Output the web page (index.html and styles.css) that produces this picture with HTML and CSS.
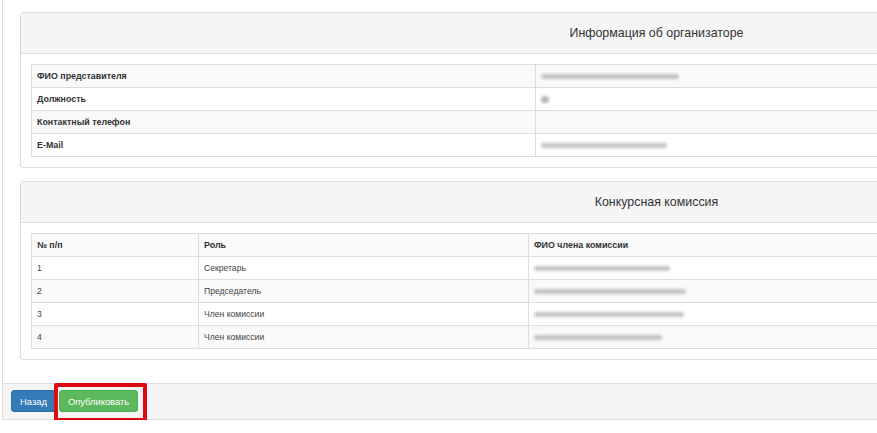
FILE: index.html
```html
<!DOCTYPE html>
<html lang="ru">
<head>
    <meta charset="UTF-8">
    <meta name="viewport" content="width=device-width, initial-scale=1.0">
    <title>Публикация конкурса</title>
    <link rel="stylesheet" href="styles.css">
</head>
<body>
    <div class="page">
        <div class="outer-panel">
            <div class="outer-body">

                <div class="panel">
                    <div class="panel-heading">Информация об организаторе</div>
                    <div class="panel-body">
                        <table class="table table-info">
                            <tbody>
                                <tr>
                                    <th class="col-label">ФИО представителя</th>
                                    <td><span class="blur" style="width: 138px"></span></td>
                                </tr>
                                <tr>
                                    <th>Должность</th>
                                    <td><span class="blur blur-dot" style="width: 8px"></span></td>
                                </tr>
                                <tr>
                                    <th>Контактный телефон</th>
                                    <td></td>
                                </tr>
                                <tr>
                                    <th>E-Mail</th>
                                    <td><span class="blur" style="width: 126px"></span></td>
                                </tr>
                            </tbody>
                        </table>
                    </div>
                </div>

                <div class="panel">
                    <div class="panel-heading">Конкурсная комиссия</div>
                    <div class="panel-body">
                        <table class="table table-commission">
                            <tbody>
                                <tr>
                                    <th class="col-num">№ п/п</th>
                                    <th class="col-role">Роль</th>
                                    <th>ФИО члена комиссии</th>
                                </tr>
                                <tr>
                                    <td>1</td>
                                    <td>Секретарь</td>
                                    <td><span class="blur" style="width: 136px"></span></td>
                                </tr>
                                <tr>
                                    <td>2</td>
                                    <td>Председатель</td>
                                    <td><span class="blur" style="width: 152px"></span></td>
                                </tr>
                                <tr>
                                    <td>3</td>
                                    <td>Член комиссии</td>
                                    <td><span class="blur" style="width: 150px"></span></td>
                                </tr>
                                <tr>
                                    <td>4</td>
                                    <td>Член комиссии</td>
                                    <td><span class="blur" style="width: 128px"></span></td>
                                </tr>
                            </tbody>
                        </table>
                    </div>
                </div>

            </div>
            <div class="outer-footer">
                <button class="btn btn-primary">Назад</button>
                <span class="highlight">
                    <button class="btn btn-success">Опубликовать</button>
                </span>
            </div>
        </div>
    </div>
</body>
</html>
```

FILE: styles.css
```css
html, body {
    overflow: hidden;
}
body {
    margin: 0;
    font-family: "Liberation Sans", Arial, Helvetica, sans-serif;
    font-size: 8.6px;
    color: #333;
    background-color: #fff;
}
.page {
    width: 1311px;
}
.outer-panel {
    margin-left: 2px;
    border: 1px solid #ddd;
    border-top: none;
    background-color: #fff;
}
.outer-body {
    padding: 12px 17px 23px 17px;
}
.panel {
    border: 1px solid #ddd;
    border-radius: 3px;
    margin-bottom: 13px;
    background-color: #fff;
}
.panel:last-child {
    margin-bottom: 0;
}
.panel-heading {
    height: 40px;
    line-height: 40px;
    background-color: #f5f5f5;
    border-bottom: 1px solid #ddd;
    text-align: center;
    font-size: 12.4px;
    color: #333;
}
.panel-body {
    padding: 10px;
}
.table {
    width: 100%;
    border-collapse: collapse;
}
.table th,
.table td {
    border: 1px solid #ddd;
    height: 22px;
    padding: 0 5px;
    text-align: left;
    vertical-align: middle;
    line-height: 12px;
}
.table th {
    font-size: 8.9px;
    font-weight: bold;
    color: #333;
}
.table td {
    color: #444;
}
.table tr:nth-child(odd) {
    background-color: #f9f9f9;
}
.col-label {
    width: 493px;
}
.col-num {
    width: 156px;
}
.col-role {
    width: 319px;
}
.blur {
    display: inline-block;
    height: 5px;
    vertical-align: middle;
    background-color: #b9b9b9;
    border-radius: 3px;
    filter: blur(1.5px);
    opacity: 0.85;
}
.blur-dot {
    height: 7px;
    background-color: #a8a8a8;
}
.outer-footer {
    background-color: #f5f5f5;
    border-top: 1px solid #ddd;
    padding: 6px 8px 7px 8px;
    height: 22px;
    display: flex;
    align-items: flex-start;
    gap: 3px;
}
.btn {
    height: 22px;
    padding: 0 8px;
    border-radius: 3px;
    border: 1px solid transparent;
    font-family: inherit;
    font-size: 9.4px;
    color: #fff;
    cursor: pointer;
}
.btn-primary {
    background-color: #337ab7;
    border-color: #2e6da4;
}
.btn-success {
    background-color: #5cb85c;
    border-color: #4cae4c;
}
.highlight {
    position: relative;
    display: inline-block;
}
.highlight::after {
    content: "";
    position: absolute;
    left: -5px;
    top: -7px;
    width: 85px;
    height: 31px;
    border: 4px solid #dd0a14;
    border-radius: 2px;
    pointer-events: none;
}
```
